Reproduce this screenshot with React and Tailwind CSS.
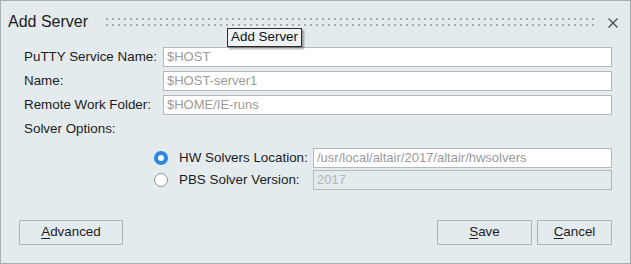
import React from "react";

const Field = ({ value, disabled }) => (
  <div
    className={`h-[20px] flex-1 border border-[#b3b9bc] flex items-center pl-[3px] text-[13px] ${
      disabled ? "bg-[#e4ebee] text-[#b2b5b7]" : "bg-white text-[#9a9a9a]"
    }`}
  >
    {value}
  </div>
);

const Row = ({ label, value }) => (
  <div className="flex items-center h-[20px]">
    <div className="w-[139px] text-[13.4px] text-[#1c1c1c]">{label}</div>
    <Field value={value} />
  </div>
);

const Radio = ({ checked }) =>
  checked ? (
    <div className="w-[14px] h-[14px] rounded-full bg-[#2a88de] flex items-center justify-center">
      <div className="w-[6px] h-[6px] rounded-full bg-white" />
    </div>
  ) : (
    <div className="w-[14px] h-[14px] rounded-full bg-white border border-[#8d9296]" />
  );

const Button = ({ className, children }) => (
  <button className={`h-[25px] border border-[#adb4b7] bg-[#e4ebee] text-[13.4px] text-[#1c1c1c] rounded-[1px] ${className}`}>
    {children}
  </button>
);

export default function App() {
  return (
    <div
      className="relative w-[631px] h-[264px] border border-[#a6aeb2] bg-[#e4ebee] flex flex-col"
      style={{ fontFamily: '"Liberation Sans", Arial, sans-serif' }}
    >
      {/* Title bar */}
      <div className="flex h-[46px] pl-[7px] pr-[11px]">
        <div className="pt-[12px] text-[16px] leading-[18px] text-[#1c1c1c]">Add Server</div>
        <div className="flex-1 ml-[18px] mr-[10px] pt-[17px]">
          <svg width="100%" height="10">
            <defs>
              <pattern id="grip" width="6" height="6" patternUnits="userSpaceOnUse">
                <rect x="0" y="0" width="2" height="2" fill="#a3aaae" />
              </pattern>
            </defs>
            <rect x="0" y="0" width="100%" height="8" fill="url(#grip)" />
          </svg>
        </div>
        <div className="pt-[16px]">
          <svg width="12" height="12" viewBox="0 0 12 12">
            <path d="M1.5 1.5 L10.5 10.5 M10.5 1.5 L1.5 10.5" stroke="#4a4f52" strokeWidth="1.4" />
          </svg>
        </div>
      </div>

      {/* Tooltip */}
      <div className="absolute left-[226px] top-[27px] h-[19px] px-[3px] flex items-center border border-[#2b2b2b] bg-[#eef2f4] text-[13.4px] text-[#111] shadow-[2px_2px_2px_rgba(0,0,0,0.35)]">
        Add Server
      </div>

      {/* Form */}
      <div className="flex flex-col gap-[4px] pl-[23px] pr-[18px]">
        <Row label="PuTTY Service Name:" value="$HOST" />
        <Row label="Name:" value="$HOST-server1" />
        <Row label="Remote Work Folder:" value="$HOME/IE-runs" />
        <div className="h-[20px] flex items-center text-[13.4px] text-[#1c1c1c]">Solver Options:</div>
      </div>

      <div className="flex flex-col gap-[2px] mt-[9px] pl-[153px] pr-[18px]">
        <div className="flex items-center h-[20px]">
          <Radio checked />
          <div className="ml-[11px] w-[134px] text-[13.4px] text-[#1c1c1c]">HW Solvers Location:</div>
          <Field value="/usr/local/altair/2017/altair/hwsolvers" />
        </div>
        <div className="flex items-center h-[20px]">
          <Radio />
          <div className="ml-[11px] w-[134px] text-[13.4px] text-[#1c1c1c]">PBS Solver Version:</div>
          <Field value="2017" disabled />
        </div>
      </div>

      {/* Buttons */}
      <div className="mt-auto mb-[18px] flex items-center pl-[18px] pr-[18px]">
        <Button className="w-[104px]">
          <span className="underline underline-offset-2">A</span>dvanced
        </Button>
        <div className="flex-1" />
        <Button className="w-[95px]">
          <span className="underline underline-offset-2">S</span>ave
        </Button>
        <Button className="w-[75px] ml-[5px]">
          <span className="underline underline-offset-2">C</span>ancel
        </Button>
      </div>
    </div>
  );
}
